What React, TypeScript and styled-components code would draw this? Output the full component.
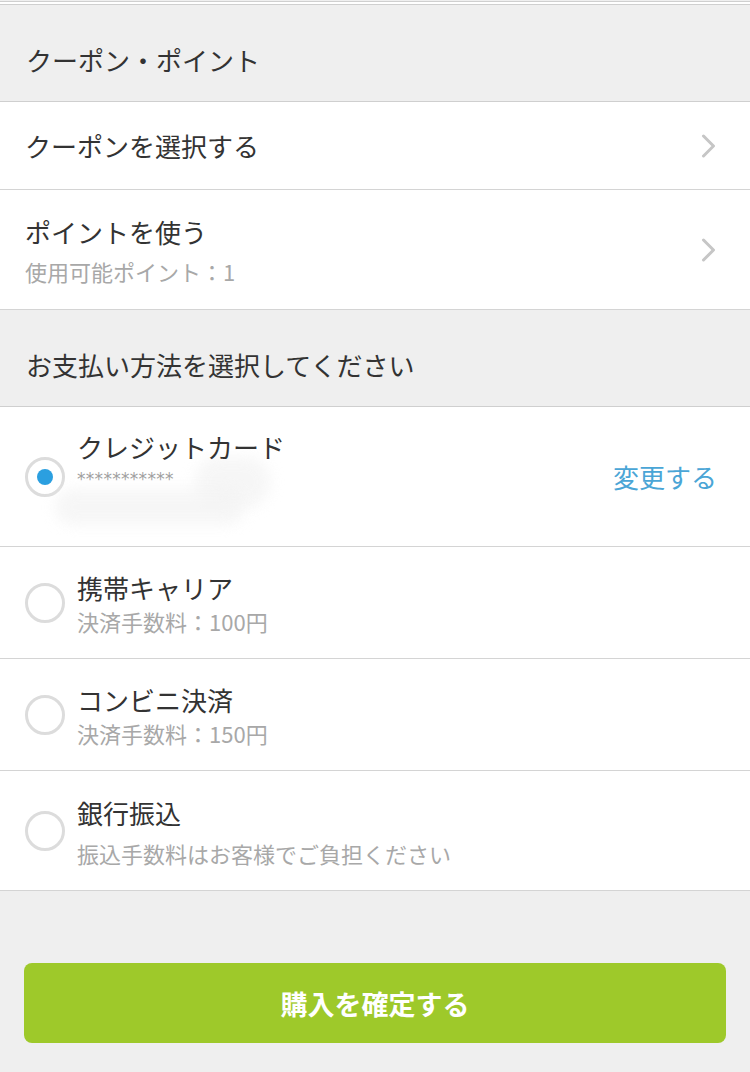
import React from "react";
import styled, { createGlobalStyle } from "styled-components";

const Global = createGlobalStyle`
  html, body { margin: 0; padding: 0; background: #ffffff; }
  body { font-family: "Noto Sans CJK JP", "Noto Sans", sans-serif; color: #333; }
  * { box-sizing: border-box; }
`;

const Page = styled.div`
  width: 750px;
  min-height: 1072px;
  background: #efefef;
  display: flex;
  flex-direction: column;
`;

const TopStrip = styled.div`
  background: #fff;
  border-top: 1px solid #cfcfcf;
  border-bottom: 1px solid #cfcfcf;
  margin-top: 1px;
  height: 4px;
`;

const SectionHeader = styled.div`
  height: 97px;
  padding: 37px 26px 0;
  background: #efefef;
  border-bottom: 1px solid #cfcfcf;
  font-size: 26px;
  line-height: 36px;
  color: #333;
`;

const Row = styled.div<{ $h: number }>`
  position: relative;
  height: ${(p) => p.$h}px;
  background: #fff;
  border-bottom: 1px solid #d4d4d4;
  display: flex;
  align-items: center;
  padding: 0 34px 0 25px;
`;

const Texts = styled.div<{ $pt: number; $gap: number }>`
  position: relative;
  z-index: 1;
  flex: 1;
  align-self: flex-start;
  padding-top: ${(p) => p.$pt}px;
  display: flex;
  flex-direction: column;
  gap: ${(p) => p.$gap}px;
`;

const Title = styled.div`
  font-size: 26px;
  line-height: 36px;
  color: #333;
`;

const Sub = styled.div`
  font-size: 22px;
  line-height: 30px;
  color: #a8a8a8;
`;

const Masked = styled.div`
  font-family: "DejaVu Sans", sans-serif;
  font-size: 17px;
  line-height: 20px;
  letter-spacing: 0.3px;
  color: #a0a0a0;
`;

const Chevron = styled.svg`
  width: 15px;
  height: 24px;
  flex: none;
`;

const Radio = styled.div<{ $on?: boolean }>`
  width: 40px;
  height: 40px;
  flex: none;
  border-radius: 50%;
  border: 3px solid #dcdcdc;
  background: #fff;
  display: flex;
  align-items: center;
  justify-content: center;
  margin-right: 12px;
  &::after {
    content: "";
    display: ${(p) => (p.$on ? "block" : "none")};
    width: 16px;
    height: 16px;
    border-radius: 50%;
    background: #2b9fe0;
  }
`;

const ChangeLink = styled.div`
  font-size: 26px;
  line-height: 36px;
  color: #4aa5d6;
  margin-right: -1px;
`;

const Smudge = styled.div<{ $l: number; $t: number; $w: number; $hh: number }>`
  position: absolute;
  left: ${(p) => p.$l}px;
  top: ${(p) => p.$t}px;
  width: ${(p) => p.$w}px;
  height: ${(p) => p.$hh}px;
  border-radius: 24px;
  background: #f3f3f3;
  filter: blur(7px);
  opacity: 0.7;
`;

const Footer = styled.div`
  flex: 1;
  padding: 72px 24px 29px;
  background: #efefef;
`;

const BuyButton = styled.button`
  width: 702px;
  height: 80px;
  border: none;
  border-radius: 8px;
  background: #9ec92a;
  color: #fff;
  font-family: "Noto Sans CJK JP", sans-serif;
  font-size: 27px;
  font-weight: 700;
  display: flex;
  align-items: center;
  justify-content: center;
  cursor: pointer;
`;

const Arrow = () => (
  <Chevron viewBox="0 0 15 24">
    <polyline points="2.5,2 12.5,12 2.5,22" fill="none" stroke="#c6c6c6" strokeWidth="3" strokeLinecap="round" strokeLinejoin="round" />
  </Chevron>
);

export default function App() {
  return (
    <Page>
      <Global />
      <TopStrip />
      <SectionHeader>クーポン・ポイント</SectionHeader>
      <Row $h={88}>
        <Texts $pt={26} $gap={0}>
          <Title>クーポンを選択する</Title>
        </Texts>
        <Arrow />
      </Row>
      <Row $h={120}>
        <Texts $pt={24} $gap={6}>
          <Title>ポイントを使う</Title>
          <Sub>使用可能ポイント：1</Sub>
        </Texts>
        <Arrow />
      </Row>
      <SectionHeader>お支払い方法を選択してください</SectionHeader>
      <Row $h={140}>
        <Smudge $l={195} $t={50} $w={75} $hh={50} />
        <Smudge $l={55} $t={82} $w={190} $hh={36} />
        <Radio $on />
        <Texts $pt={22} $gap={4}>
          <Title>クレジットカード</Title>
          <Masked>***********</Masked>
        </Texts>
        <ChangeLink>変更する</ChangeLink>
      </Row>
      <Row $h={112}>
        <Radio />
        <Texts $pt={23} $gap={0}>
          <Title>携帯キャリア</Title>
          <Sub>決済手数料：100円</Sub>
        </Texts>
      </Row>
      <Row $h={112}>
        <Radio />
        <Texts $pt={23} $gap={0}>
          <Title>コンビニ決済</Title>
          <Sub>決済手数料：150円</Sub>
        </Texts>
      </Row>
      <Row $h={120}>
        <Radio />
        <Texts $pt={24} $gap={7}>
          <Title>銀行振込</Title>
          <Sub>振込手数料はお客様でご負担ください</Sub>
        </Texts>
      </Row>
      <Footer>
        <BuyButton>購入を確定する</BuyButton>
      </Footer>
    </Page>
  );
}
